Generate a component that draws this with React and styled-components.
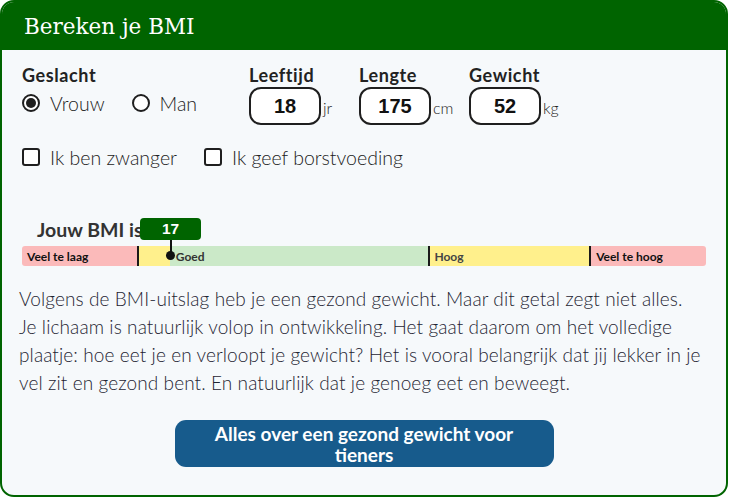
import React from 'react';
import styled, { createGlobalStyle } from 'styled-components';

const green = '#006400';
const ink = '#1d1d1f';
const uiFont = `Lato, "Open Sans", sans-serif`;

const GlobalStyle = createGlobalStyle`
    html, body {
        margin: 0;
        padding: 0;
        background: #ffffff;
    }
    * {
        box-sizing: border-box;
    }
`;

const Card = styled.div`
    width: 728px;
    height: 497px;
    border: 2px solid ${green};
    border-radius: 14px;
    overflow: hidden;
    background: #f6f9fb;
    font-family: ${uiFont};
    color: ${ink};
    display: flex;
    flex-direction: column;
`;

const Header = styled.div`
    height: 48px;
    background: ${green};
    display: flex;
    align-items: center;
    padding-left: 22px;
    color: #ffffff;
    font-family: "DejaVu Serif", "Liberation Serif", serif;
    font-size: 21.5px;
`;

const Body = styled.div`
    padding: 15px 20px 0 20px;
    display: flex;
    flex-direction: column;
`;

const TopRow = styled.div`
    display: flex;
`;

const Group = styled.div`
    width: ${(p) => p.$w}px;
    display: flex;
    flex-direction: column;
`;

const Label = styled.div`
    height: 20px;
    line-height: 20px;
    font-size: 18px;
    letter-spacing: 0.6px;
    font-weight: 700;
    color: #222;
    margin-bottom: 2px;
`;

const OptionRow = styled.div`
    height: 32px;
    display: flex;
    align-items: center;
    gap: ${(p) => p.$gap || 0}px;
`;

const Option = styled.label`
    display: flex;
    align-items: center;
    gap: 10px;
    font-size: 19.5px;
    font-weight: 300;
    color: #222;
`;

const Radio = styled.span`
    width: 18px;
    height: 18px;
    border: 2px solid #1f1f1f;
    border-radius: 50%;
    display: flex;
    align-items: center;
    justify-content: center;
    background: #fff;
    &::after {
        content: '';
        width: 10px;
        height: 10px;
        border-radius: 50%;
        background: ${(p) => (p.$checked ? '#1f1f1f' : 'transparent')};
    }
`;

const Box = styled.span`
    width: 18px;
    height: 18px;
    border: 2px solid #1f1f1f;
    border-radius: 3px;
    background: #fff;
`;

const InputRow = styled.div`
    display: flex;
    align-items: center;
`;

const NumberBox = styled.div`
    width: 72px;
    height: 38px;
    border: 2px solid #1f1f1f;
    border-radius: 12px;
    background: #fff;
    display: flex;
    align-items: center;
    justify-content: center;
    font-family: "Liberation Sans", Arial, sans-serif;
    font-size: 20px;
    font-weight: 700;
    color: #111;
`;

const Unit = styled.span`
    margin-left: 2px;
    font-size: 16px;
    font-weight: 300;
    color: #222;
    margin-top: 2px;
`;

const CheckRow = styled.div`
    margin-top: 22px;
    height: 20px;
    display: flex;
    align-items: center;
    gap: 27px;
`;

const Result = styled.div`
    margin-top: 51px;
    position: relative;
`;

const ResultLabel = styled.div`
    padding-left: 15px;
    height: 24px;
    line-height: 24px;
    font-size: 19.5px;
    font-weight: 700;
    color: #333;
`;

const Scale = styled.div`
    margin-top: 4px;
    height: 20px;
    display: flex;
    border-radius: 3px;
    overflow: hidden;
`;

const Segment = styled.div`
    width: ${(p) => p.$w}px;
    background: ${(p) => p.$bg};
    border-left: ${(p) => (p.$edge ? '2px solid #1a1a1a' : 'none')};
    display: flex;
    align-items: center;
    padding-left: ${(p) => p.$pad || 5}px;
    font-size: 12px;
    font-weight: 700;
    color: ${(p) => p.$color || '#111'};
    white-space: nowrap;
`;

const Marker = styled.div`
    position: absolute;
    top: 0;
    width: 61px;
    margin-left: -30px;
    display: flex;
    flex-direction: column;
    align-items: center;
`;

const Badge = styled.div`
    width: 61px;
    height: 22px;
    border-radius: 4px;
    background: ${green};
    color: #fff;
    font-family: "Liberation Sans", Arial, sans-serif;
    font-weight: 700;
    font-size: 15.5px;
    display: flex;
    align-items: center;
    justify-content: center;
`;

const Stem = styled.div`
    width: 2px;
    height: 14px;
    background: #111;
`;

const Dot = styled.div`
    width: 9px;
    height: 9px;
    margin-top: -3px;
    border-radius: 50%;
    background: #111;
`;

const Text = styled.p`
    width: 682px;
    margin: 19px 0 0 -3px;
    font-size: 19px;
    letter-spacing: 0.1px;
    line-height: 28px;
    font-weight: 300;
    color: #1f2533;
`;

const Button = styled.button`
    align-self: center;
    margin-top: 23px;
    width: 379px;
    height: 47px;
    border: none;
    border-radius: 11px;
    background: #175b8c;
    color: #fff;
    font-family: ${uiFont};
    font-size: 19px;
    font-weight: 700;
    line-height: 21px;
    padding: 0 20px;
`;

const fields = [
    { label: 'Leeftijd', value: 18, unit: 'jr' },
    { label: 'Lengte', value: 175, unit: 'cm' },
    { label: 'Gewicht', value: 52, unit: 'kg' },
];

const App = () => {
    const markerX = 148;

    return (
        <>
            <GlobalStyle />
            <Card>
                <Header>Bereken je BMI</Header>
                <Body>
                    <TopRow>
                        <Group $w={227}>
                            <Label>Geslacht</Label>
                            <OptionRow $gap={27}>
                                <Option>
                                    <Radio $checked />
                                    Vrouw
                                </Option>
                                <Option>
                                    <Radio />
                                    Man
                                </Option>
                            </OptionRow>
                        </Group>
                        {fields.map((f) => (
                            <Group $w={110} key={f.label}>
                                <Label>{f.label}</Label>
                                <InputRow>
                                    <NumberBox>{f.value}</NumberBox>
                                    <Unit>{f.unit}</Unit>
                                </InputRow>
                            </Group>
                        ))}
                    </TopRow>

                    <CheckRow>
                        <Option>
                            <Box />
                            Ik ben zwanger
                        </Option>
                        <Option>
                            <Box />
                            Ik geef borstvoeding
                        </Option>
                    </CheckRow>

                    <Result>
                        <ResultLabel>Jouw BMI is</ResultLabel>
                        <Scale>
                            <Segment $w={115} $bg="#fbbaba">Veel te laag</Segment>
                            <Segment $w={33} $bg="#fff08c" $edge />
                            <Segment $w={259} $bg="#cbe9c8" $pad={6} $color="#333">
                                Goed
                            </Segment>
                            <Segment $w={161} $bg="#fff08c" $edge $pad={4} $color="#444">
                                Hoog
                            </Segment>
                            <Segment $w={117} $bg="#fbbaba" $edge>
                                Veel te hoog
                            </Segment>
                        </Scale>
                        <Marker style={{ left: markerX }}>
                            <Badge>17</Badge>
                            <Stem />
                            <Dot />
                        </Marker>
                    </Result>

                    <Text>
                        Volgens de BMI-uitslag heb je een gezond gewicht. Maar dit getal zegt niet alles.
                        Je lichaam is natuurlijk volop in ontwikkeling. Het gaat daarom om het volledige
                        plaatje: hoe eet je en verloopt je gewicht? Het is vooral belangrijk dat jij lekker
                        in je vel zit en gezond bent. En natuurlijk dat je genoeg eet en beweegt.
                    </Text>

                    <Button>Alles over een gezond gewicht voor tieners</Button>
                </Body>
            </Card>
        </>
    );
};

export default App;
